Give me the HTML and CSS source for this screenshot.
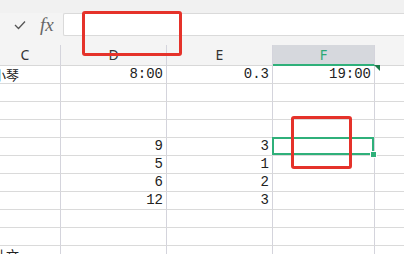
FILE: index.html
```html
<!DOCTYPE html>
<html lang="zh-CN">
<head>
    <meta charset="UTF-8">
    <title>表格</title>
    <link rel="stylesheet" href="styles.css">
</head>
<body>
<div class="top"></div>
<div class="formula">
    <div class="tools">
        <svg class="check" width="12" height="10" viewBox="0 0 12 10"><polyline points="1,5 4.5,8.5 11,1.5" fill="none" stroke="#555" stroke-width="1.3"/></svg>
        <span class="fx">fx</span>
    </div>
    <div class="input"></div>
</div>
<div class="spacer"></div>
<div class="sheet">
    <!-- 列标题 -->
    <div class="head">C</div>
    <div class="head">D</div>
    <div class="head">E</div>
    <div class="head active">F</div>
    <div class="head last"></div>

    <div class="cell cn">小琴</div><div class="cell num">8:00</div><div class="cell num">0.3</div><div class="cell num mark">19:00</div><div class="cell last"></div>
    <div class="cell"></div><div class="cell"></div><div class="cell"></div><div class="cell"></div><div class="cell last"></div>
    <div class="cell"></div><div class="cell"></div><div class="cell"></div><div class="cell"></div><div class="cell last"></div>
    <div class="cell"></div><div class="cell"></div><div class="cell"></div><div class="cell"></div><div class="cell last"></div>
    <div class="cell"></div><div class="cell num">9</div><div class="cell num">3</div><div class="cell sel"></div><div class="cell last"></div>
    <div class="cell"></div><div class="cell num">5</div><div class="cell num">1</div><div class="cell"></div><div class="cell last"></div>
    <div class="cell"></div><div class="cell num">6</div><div class="cell num">2</div><div class="cell"></div><div class="cell last"></div>
    <div class="cell"></div><div class="cell num">12</div><div class="cell num">3</div><div class="cell"></div><div class="cell last"></div>
    <div class="cell"></div><div class="cell"></div><div class="cell"></div><div class="cell"></div><div class="cell last"></div>
    <div class="cell"></div><div class="cell"></div><div class="cell"></div><div class="cell"></div><div class="cell last"></div>
    <div class="cell cn">叶文</div><div class="cell"></div><div class="cell"></div><div class="cell"></div><div class="cell last"></div>
</div>
<!-- 标注框 -->
<div class="note note1"></div>
<div class="note note2"></div>
</body>
</html>
```

FILE: styles.css
```css
* {
    margin: 0;
    padding: 0;
    box-sizing: border-box;
}
body {
    width: 404px;
    height: 254px;
    overflow: hidden;
    background-color: #f4f4f4;
    font-family: "Noto Sans", "Noto Sans CJK SC", sans-serif;
    color: #333;
    position: relative;
}
.top {
    height: 13px;
    background-color: #f1f1f1;
}
.formula {
    height: 23px;
    display: flex;
}
.tools {
    width: 63px;
    display: flex;
    align-items: center;
    padding-left: 14px;
    gap: 14px;
}
.fx {
    font-family: "Liberation Serif", serif;
    font-style: italic;
    font-size: 19px;
    color: #666;
    line-height: 20px;
}
.input {
    flex: 1;
    background-color: #fff;
    border: 1px solid #dadada;
    border-right: 0;
    border-radius: 2px 0 0 2px;
}
.spacer {
    height: 9px;
}
.sheet {
    display: grid;
    grid-template-columns: 71px 106px 106px 102px 1fr;
    margin-left: -10px;
}
.head {
    height: 21px;
    line-height: 20px;
    text-align: center;
    font-size: 14px;
    border-right: 1px solid #d4d4dc;
    border-bottom: 1px solid #d8d8d8;
}
.head.active {
    background-color: #d6d8dd;
    color: #2aa874;
    border-bottom: 2px solid #2fb07a;
}
.cell {
    height: 18px;
    line-height: 17px;
    background-color: #fff;
    border-right: 1px solid #d4d4dc;
    border-bottom: 1px solid #dadada;
    padding: 0 3px;
    white-space: nowrap;
    position: relative;
}
.last {
    border-right: 0;
}
.num {
    text-align: right;
    font-family: "Liberation Mono", monospace;
    font-size: 14px;
    color: #222;
}
.cn {
    font-family: "Noto Sans CJK SC", sans-serif;
    font-size: 13px;
    color: #222;
}
.mark::before {
    content: "";
    position: absolute;
    top: -1px;
    right: -6px;
    border-top: 6px solid #1d7a4a;
    border-left: 6px solid transparent;
    z-index: 2;
}
.sel::after {
    content: "";
    position: absolute;
    top: -1px;
    left: -1px;
    right: 0;
    bottom: 0;
    border: 2px solid #2fb07a;
}
.sel::before {
    content: "";
    position: absolute;
    right: -3px;
    bottom: -3px;
    width: 5px;
    height: 5px;
    background-color: #2fb07a;
    border: 1px solid #fff;
    z-index: 1;
}
.note {
    position: absolute;
    border: 3px solid #e5322a;
    border-radius: 3px;
}
.note1 {
    left: 82px;
    top: 11px;
    width: 100px;
    height: 45px;
}
.note2 {
    left: 291px;
    top: 116px;
    width: 61px;
    height: 53px;
}
```
